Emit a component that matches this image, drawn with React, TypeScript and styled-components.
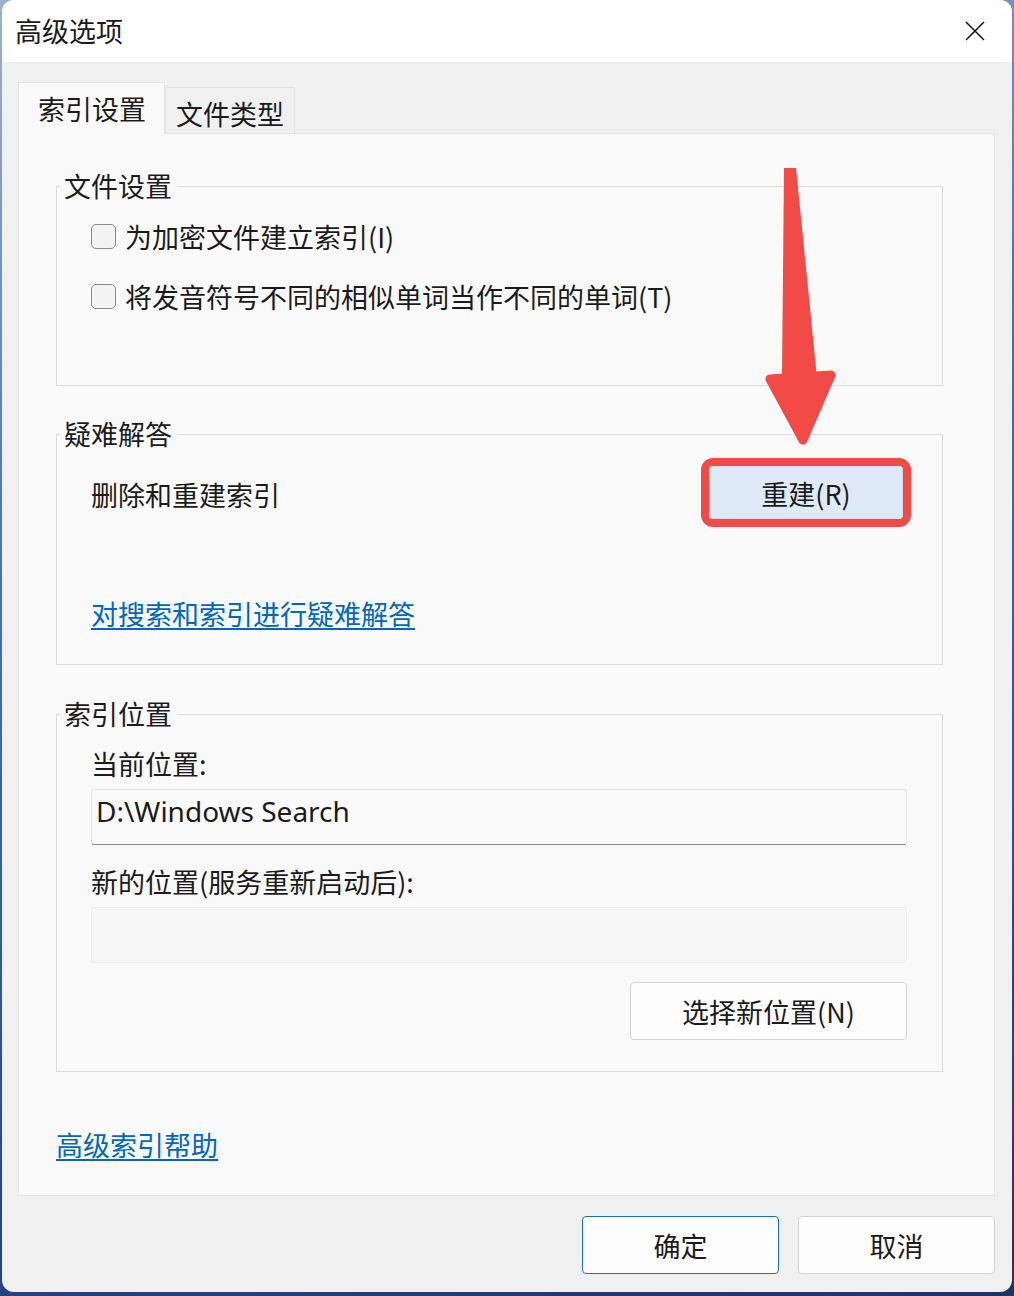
import React from 'react';
import styled, { createGlobalStyle } from 'styled-components';

const GlobalStyle = createGlobalStyle`
  html, body {
    margin: 0;
    padding: 0;
  }
  body {
    width: 1014px;
    height: 1296px;
    overflow: hidden;
    background: linear-gradient(165deg, #9bb2cc 0%, #4a74b0 35%, #2a4f92 70%, #1c3468 100%);
    font-family: "Noto Sans CJK SC", "Noto Sans", sans-serif;
    color: #1b1b1b;
  }
`;

const Desktop = styled.div`
  position: relative;
  width: 1014px;
  height: 1296px;
  padding: 0 2px;
  box-sizing: border-box;
`;

const Window = styled.div`
  width: 1010px;
  height: 1292px;
  border-radius: 12px;
  overflow: hidden;
  background: #f0f0f0;
  display: flex;
  flex-direction: column;
`;

const TitleBar = styled.div`
  height: 62px;
  flex-shrink: 0;
  background: #ffffff;
  display: flex;
  align-items: center;
  justify-content: space-between;
  padding: 0 27px 0 13px;
  font-size: 27px;
  line-height: 34px;
`;

const CloseIcon = styled.svg`
  width: 20px;
  height: 20px;
  display: block;
`;

const Body = styled.div`
  flex: 1;
  display: flex;
  flex-direction: column;
  padding: 20px 17px 0 16px;
`;

const TabRow = styled.div`
  display: flex;
  align-items: flex-end;
  height: 51px;
`;

const Tab = styled.div<{ $active?: boolean }>`
  box-sizing: border-box;
  height: ${p => (p.$active ? 52 : 46)}px;
  margin-bottom: ${p => (p.$active ? -1 : 0)}px;
  padding: ${p => (p.$active ? '0 18px 0 19px' : '5px 10px 0 10px')};
  background: ${p => (p.$active ? '#f9f9f9' : '#f0f0f0')};
  border: 1px solid #e3e3e3;
  border-bottom: none;
  position: relative;
  z-index: ${p => (p.$active ? 2 : 1)};
  display: flex;
  align-items: center;
  font-size: 27px;
`;

const Panel = styled.div`
  height: 1063px;
  box-sizing: border-box;
  background: #f9f9f9;
  border: 1px solid #e3e3e3;
  padding: 38px 51px 0 37px;
  display: flex;
  flex-direction: column;
`;

const Group = styled.fieldset<{ $top?: number }>`
  margin: ${p => p.$top ?? 0}px 0 0;
  padding: 0;
  border: 1px solid #dcdcdc;
  min-width: 0;
`;

const Legend = styled.legend`
  margin-left: 3px;
  padding: 0 5px 0 4px;
  font-size: 27px;
  line-height: 28px;
`;

const GroupInner = styled.div<{ $pad: string }>`
  padding: ${p => p.$pad};
  display: flex;
  flex-direction: column;
`;

const CheckRow = styled.label<{ $top?: number }>`
  display: flex;
  align-items: center;
  gap: 9px;
  height: 40px;
  margin-top: ${p => p.$top ?? 0}px;
  font-size: 27px;
`;

const CheckBox = styled.span`
  width: 25px;
  height: 25px;
  box-sizing: border-box;
  border: 1px solid #8a8a8a;
  border-radius: 5px;
  background: #f3f3f3;
  flex-shrink: 0;
`;

const ActionRow = styled.div`
  display: flex;
  align-items: center;
  justify-content: space-between;
  height: 69px;
`;

const Label = styled.div<{ $top?: number }>`
  font-size: 27px;
  line-height: 34px;
  margin-top: ${p => p.$top ?? 0}px;
`;

const RedFrame = styled.div`
  border: 8px solid #f24a46;
  border-radius: 12px;
  display: flex;
`;

const RebuildButton = styled.button`
  width: 194px;
  height: 53px;
  box-sizing: border-box;
  border: 1px solid #cddcf0;
  border-radius: 4px;
  background: #deeaf8;
  font-family: inherit;
  font-size: 27px;
  line-height: 34px;
  padding: 3px 0 0;
  color: #1b1b1b;
`;

const Link = styled.a<{ $top?: number }>`
  display: block;
  align-self: flex-start;
  margin-top: ${p => p.$top ?? 0}px;
  font-size: 27px;
  line-height: 34px;
  color: #0067c0;
  text-decoration: underline;
  text-underline-offset: 3px;
  cursor: pointer;
`;

const Field = styled.div<{ $disabled?: boolean; $top?: number }>`
  height: 56px;
  box-sizing: border-box;
  margin-top: ${p => p.$top ?? 0}px;
  padding: 1px 4px 0;
  background: ${p => (p.$disabled ? '#f6f6f6' : '#fafafa')};
  border: 1px solid ${p => (p.$disabled ? '#ebebeb' : '#e3e3e3')};
  border-bottom: 1px solid ${p => (p.$disabled ? '#ebebeb' : '#8a8a8a')};
  border-radius: 3px;
  font-family: "Noto Sans", "Noto Sans CJK SC", sans-serif;
  font-size: 28px;
  line-height: 40px;
`;

const ButtonRow = styled.div<{ $top?: number }>`
  display: flex;
  justify-content: flex-end;
  gap: 19px;
  margin-top: ${p => p.$top ?? 0}px;
`;

const PlainButton = styled.button<{ $w: number; $primary?: boolean }>`
  width: ${p => p.$w}px;
  height: 58px;
  box-sizing: border-box;
  border: 1px solid ${p => (p.$primary ? '#1a6fc2' : '#d3d3d3')};
  border-radius: 4px;
  background: #fdfdfd;
  font-family: inherit;
  font-size: 27px;
  color: #1b1b1b;
  padding: 0;
`;

const Arrow = styled.svg`
  position: absolute;
  left: 0;
  top: 0;
  width: 1014px;
  height: 1296px;
  pointer-events: none;
`;

export default function App() {
  return (
    <Desktop>
      <GlobalStyle />
      <Window>
        <TitleBar>
          <span>高级选项</span>
          <CloseIcon viewBox="0 0 20 20">
            <path d="M1 1 L19 19 M19 1 L1 19" stroke="#1b1b1b" strokeWidth="1.6" fill="none" />
          </CloseIcon>
        </TitleBar>
        <Body>
          <TabRow>
            <Tab $active>索引设置</Tab>
            <Tab>文件类型</Tab>
          </TabRow>
          <Panel>
            <Group>
              <Legend>文件设置</Legend>
              <GroupInner $pad="16px 36px 69px 34px">
                <CheckRow>
                  <CheckBox />
                  为加密文件建立索引(I)
                </CheckRow>
                <CheckRow $top={20}>
                  <CheckBox />
                  将发音符号不同的相似单词当作不同的单词(T)
                </CheckRow>
              </GroupInner>
            </Group>

            <Group $top={34}>
              <Legend>疑难解答</Legend>
              <GroupInner $pad="10px 31px 33px 34px">
                <ActionRow>
                  <Label style={{ paddingTop: 4 }}>删除和重建索引</Label>
                  <RedFrame>
                    <RebuildButton>重建(R)</RebuildButton>
                  </RedFrame>
                </ActionRow>
                <Link $top={70}>对搜索和索引进行疑难解答</Link>
              </GroupInner>
            </Group>

            <Group $top={35}>
              <Legend>索引位置</Legend>
              <GroupInner $pad="19px 35px 31px 34px">
                <Label>当前位置:</Label>
                <Field $top={8}>D:\Windows Search</Field>
                <Label $top={20}>新的位置(服务重新启动后):</Label>
                <Field $top={8} $disabled />
                <ButtonRow $top={19}>
                  <PlainButton $w={277}>选择新位置(N)</PlainButton>
                </ButtonRow>
              </GroupInner>
            </Group>

            <Link $top={56}>高级索引帮助</Link>
          </Panel>
          <ButtonRow $top={20}>
            <PlainButton $w={197} $primary>确定</PlainButton>
            <PlainButton $w={197}>取消</PlainButton>
          </ButtonRow>
        </Body>
      </Window>
      <Arrow viewBox="0 0 1014 1296">
        <polygon points="784,168 796,168 817,378 782,378" fill="#f24a46" />
        <polygon
          points="770,379 831,375 803,440"
          fill="#f24a46"
          stroke="#f24a46"
          strokeWidth="9"
          strokeLinejoin="round"
        />
      </Arrow>
    </Desktop>
  );
}
